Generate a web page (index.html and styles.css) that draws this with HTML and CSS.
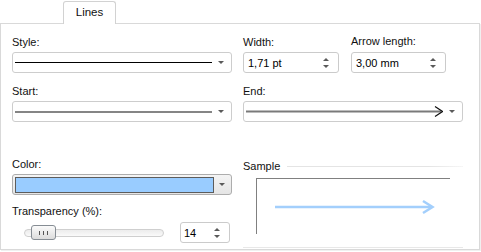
FILE: index.html
```html
<!DOCTYPE html>
<html lang="en">
<head>
  <meta charset="UTF-8">
  <title>Lines</title>
  <link rel="stylesheet" href="styles.css">
</head>
<body>

  <div class="tabs">
    <div class="tab">Lines</div>
  </div>

  <div class="panel">
    <div class="col">
      <label class="lbl">Style:</label>
      <div class="combo">
        <span class="preview"><span class="line solid"></span></span>
        <span class="drop"></span>
      </div>

      <label class="lbl start-lbl">Start:</label>
      <div class="combo">
        <span class="preview"><span class="line grey"></span></span>
        <span class="drop"></span>
      </div>

      <label class="lbl color-lbl">Color:</label>
      <div class="combo color-combo">
        <span class="swatch"></span>
        <span class="drop"></span>
      </div>

      <label class="lbl transp-lbl">Transparency (%):</label>
      <div class="slider-row">
        <div class="slider">
          <div class="track"></div>
          <div class="thumb"><i></i><i></i><i></i></div>
        </div>
        <div class="spin spin-small">
          <span class="val">14</span>
          <span class="arrows"><b class="up"></b><b class="down"></b></span>
        </div>
      </div>
    </div>

    <div class="col">
      <div class="pair">
        <div class="field field-width">
          <label class="lbl">Width:</label>
          <div class="spin">
            <span class="val">1,71 pt</span>
            <span class="arrows"><b class="up"></b><b class="down"></b></span>
          </div>
        </div>
        <div class="field field-arrow">
          <label class="lbl">Arrow length:</label>
          <div class="spin">
            <span class="val">3,00 mm</span>
            <span class="arrows"><b class="up"></b><b class="down"></b></span>
          </div>
        </div>
      </div>

      <label class="lbl start-lbl">End:</label>
      <div class="combo">
        <span class="preview">
          <svg width="197" height="11" viewBox="0 0 197 11">
            <line x1="0" y1="5.5" x2="195" y2="5.5" stroke="#7a7a7a" stroke-width="2"/>
            <polyline points="189,0.5 196.5,5.5 189,10.5" fill="none" stroke="#111" stroke-width="1.2"/>
          </svg>
        </span>
        <span class="drop"></span>
      </div>

      <div class="sample">
        <div class="sample-head">
          <span>Sample</span>
          <span class="rule"></span>
        </div>
        <div class="sample-box">
          <svg width="194" height="55" viewBox="0 0 194 55">
            <line x1="18" y1="28" x2="175" y2="28" stroke="#a3cffc" stroke-width="2.5"/>
            <polyline points="166,22 175.5,28 166,34" fill="none" stroke="#a3cffc" stroke-width="2.5"/>
          </svg>
        </div>
      </div>
    </div>
  </div>

</body>
</html>
```

FILE: styles.css
```css
* {
  box-sizing: border-box;
  margin: 0;
  padding: 0;
}

body {
  font-family: "Liberation Sans", Arial, sans-serif;
  font-size: 11px;
  color: #111;
  background: #ffffff;
  width: 481px;
  height: 252px;
  overflow: hidden;
}

/* tab strip */
.tabs {
  display: flex;
  padding-left: 63px;
  padding-top: 1px;
}

.tab {
  position: relative;
  z-index: 1;
  width: 53px;
  height: 23px;
  margin-bottom: -1px;
  border: 1px solid #d2d2d2;
  border-bottom: none;
  border-radius: 3px 3px 0 0;
  background: #fff;
  text-align: center;
  line-height: 20px;
  font-size: 11.5px;
}

/* page */
.panel {
  display: flex;
  gap: 11px;
  width: 480px;
  height: 227px;
  padding: 11px 0 0 11px;
  border: 1px solid #d9d9d9;
  box-shadow: 1px 1px 0 #f0f0f0;
}

.col {
  display: flex;
  flex-direction: column;
  width: 220px;
}

.lbl {
  display: block;
  height: 14px;
  line-height: 14px;
  margin-bottom: 3px;
}

.start-lbl {
  margin-top: 11px;
}

.color-lbl {
  margin-top: 35px;
}

.transp-lbl {
  margin-top: 9px;
  margin-bottom: 4px;
}

/* combo boxes */
.combo {
  display: flex;
  align-items: center;
  height: 21px;
  padding-left: 2px;
  border: 1px solid #cdcdcd;
  border-radius: 3px;
  background: #fff;
}

.preview {
  display: flex;
  align-items: center;
  width: 197px;
  height: 11px;
}

.line {
  display: block;
  width: 100%;
}

.line.solid {
  border-top: 1.5px solid #000;
}

.line.grey {
  border-top: 2px solid #858585;
}

.drop {
  width: 0;
  height: 0;
  margin-left: 6px;
  border-left: 3px solid transparent;
  border-right: 3px solid transparent;
  border-top: 3px solid #5a5a5a;
}

.color-combo {
  border-color: #adadad;
  background: linear-gradient(#f4f4f4, #e5e5e5);
}

.swatch {
  width: 199px;
  height: 16px;
  border: 1px solid #5c5c5c;
  background: #99ccff;
}

.color-combo .drop {
  margin-left: 5px;
}

/* spinners */
.spin {
  display: flex;
  align-items: center;
  justify-content: space-between;
  height: 21px;
  padding: 0 9px 0 4px;
  border: 1px solid #cbcbcb;
  border-radius: 3px;
  background: #fff;
  color: #000;
}

.arrows {
  display: flex;
  flex-direction: column;
  gap: 4px;
}

.arrows b {
  display: block;
  width: 0;
  height: 0;
  border-left: 3px solid transparent;
  border-right: 3px solid transparent;
}

.arrows .up {
  border-bottom: 3px solid #5a5a5a;
}

.arrows .down {
  border-top: 3px solid #5a5a5a;
}

.pair {
  display: flex;
  gap: 12px;
}

.field-width {
  width: 96px;
}

.field-arrow {
  width: 95px;
}

.field-arrow .lbl {
  margin-top: -1px;
  margin-bottom: 4px;
}

/* slider */
.slider-row {
  display: flex;
  align-items: center;
  height: 21px;
}

.slider {
  position: relative;
  width: 140px;
  height: 21px;
  margin-left: 12px;
  display: flex;
  align-items: center;
}

.track {
  width: 100%;
  height: 8px;
  border: 1px solid #cfcfcf;
  border-radius: 4px;
  background: linear-gradient(#ececec, #fafafa);
}

.thumb {
  position: absolute;
  left: 7px;
  top: 3px;
  width: 25px;
  height: 15px;
  display: flex;
  justify-content: center;
  align-items: center;
  gap: 3px;
  border: 1px solid #868d94;
  border-radius: 3px;
  background: linear-gradient(#fbfbfb, #dcdcdc);
}

.thumb i {
  width: 1px;
  height: 4px;
  background: #555;
}

.spin-small {
  width: 50px;
  margin-left: 16px;
  padding-left: 3px;
}

/* sample */
.sample {
  margin-top: 37px;
  padding-bottom: 13px;
  border-bottom: 1px solid #e8e8e8;
}

.sample-head {
  display: flex;
  align-items: center;
  gap: 7px;
  height: 14px;
  line-height: 14px;
}

.rule {
  flex: 1;
  height: 1px;
  background: linear-gradient(to right, #e4e4e4 80%, #f6f6f6);
}

.sample-box {
  width: 194px;
  height: 56px;
  margin: 5px 0 0 13px;
  border-top: 1px solid #808080;
  border-left: 1px solid #808080;
}

.sample-box svg {
  display: block;
}
```
